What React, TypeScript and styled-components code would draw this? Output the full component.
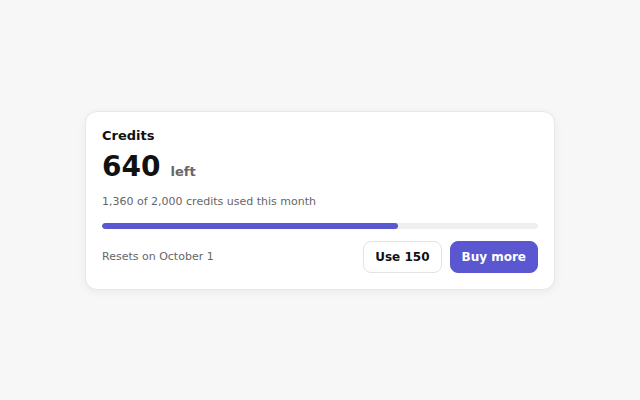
import React from "react";
import styled, { createGlobalStyle } from "styled-components";

const Global = createGlobalStyle`
  html, body { margin: 0; padding: 0; }
  body { background: #f7f7f7; font-family: "DejaVu Sans", "Noto Sans", sans-serif; }
  * { box-sizing: border-box; }
`;

const Page = styled.div`
  width: 640px;
  height: 400px;
  display: flex;
  align-items: center;
  justify-content: center;
`;

const Card = styled.div`
  width: 470px;
  background: #fff;
  border: 1px solid #e8e8e8;
  border-radius: 12px;
  box-shadow: 0 2px 10px rgba(0, 0, 0, 0.06);
  padding: 16px;
  display: flex;
  flex-direction: column;
`;

const Title = styled.div`
  font-size: 13px;
  font-weight: 700;
  color: #111;
  line-height: 16px;
`;

const AmountRow = styled.div`
  display: flex;
  align-items: baseline;
  gap: 10px;
  margin-top: 6px;
`;

const Amount = styled.span`
  font-size: 28px;
  font-weight: 700;
  color: #111;
  line-height: 34px;
`;

const Unit = styled.span`
  font-size: 13px;
  font-weight: 700;
  color: #666;
`;

const Sub = styled.div`
  font-size: 11px;
  color: #666;
  margin-top: 11px;
  line-height: 14px;
`;

const Track = styled.div`
  margin-top: 14px;
  height: 6px;
  border-radius: 3px;
  background: #efefef;
  overflow: hidden;
`;

const Fill = styled.div`
  height: 100%;
  border-radius: 3px;
  background: #5b57d1;
`;

const Footer = styled.div`
  margin-top: 12px;
  display: flex;
  align-items: center;
  justify-content: space-between;
`;

const Note = styled.div`
  font-size: 11px;
  color: #666;
`;

const Actions = styled.div`
  display: flex;
  gap: 8px;
`;

const Button = styled.button<{ $primary?: boolean }>`
  height: 32px;
  padding: 0 11px;
  border-radius: 8px;
  font-family: inherit;
  font-size: 12px;
  font-weight: 700;
  cursor: pointer;
  border: 1px solid ${(p) => (p.$primary ? "#5b57d1" : "#e3e3e3")};
  background: ${(p) => (p.$primary ? "#5b57d1" : "#fff")};
  color: ${(p) => (p.$primary ? "#fff" : "#111")};
`;

export default function App() {
  const used = 1360;
  const total = 2000;
  return (
    <>
      <Global />
      <Page>
        <Card>
          <Title>Credits</Title>
          <AmountRow>
            <Amount>640</Amount>
            <Unit>left</Unit>
          </AmountRow>
          <Sub>1,360 of 2,000 credits used this month</Sub>
          <Track>
            <Fill style={{ width: `${(used / total) * 100}%` }} />
          </Track>
          <Footer>
            <Note>Resets on October 1</Note>
            <Actions>
              <Button>Use 150</Button>
              <Button $primary>Buy more</Button>
            </Actions>
          </Footer>
        </Card>
      </Page>
    </>
  );
}
